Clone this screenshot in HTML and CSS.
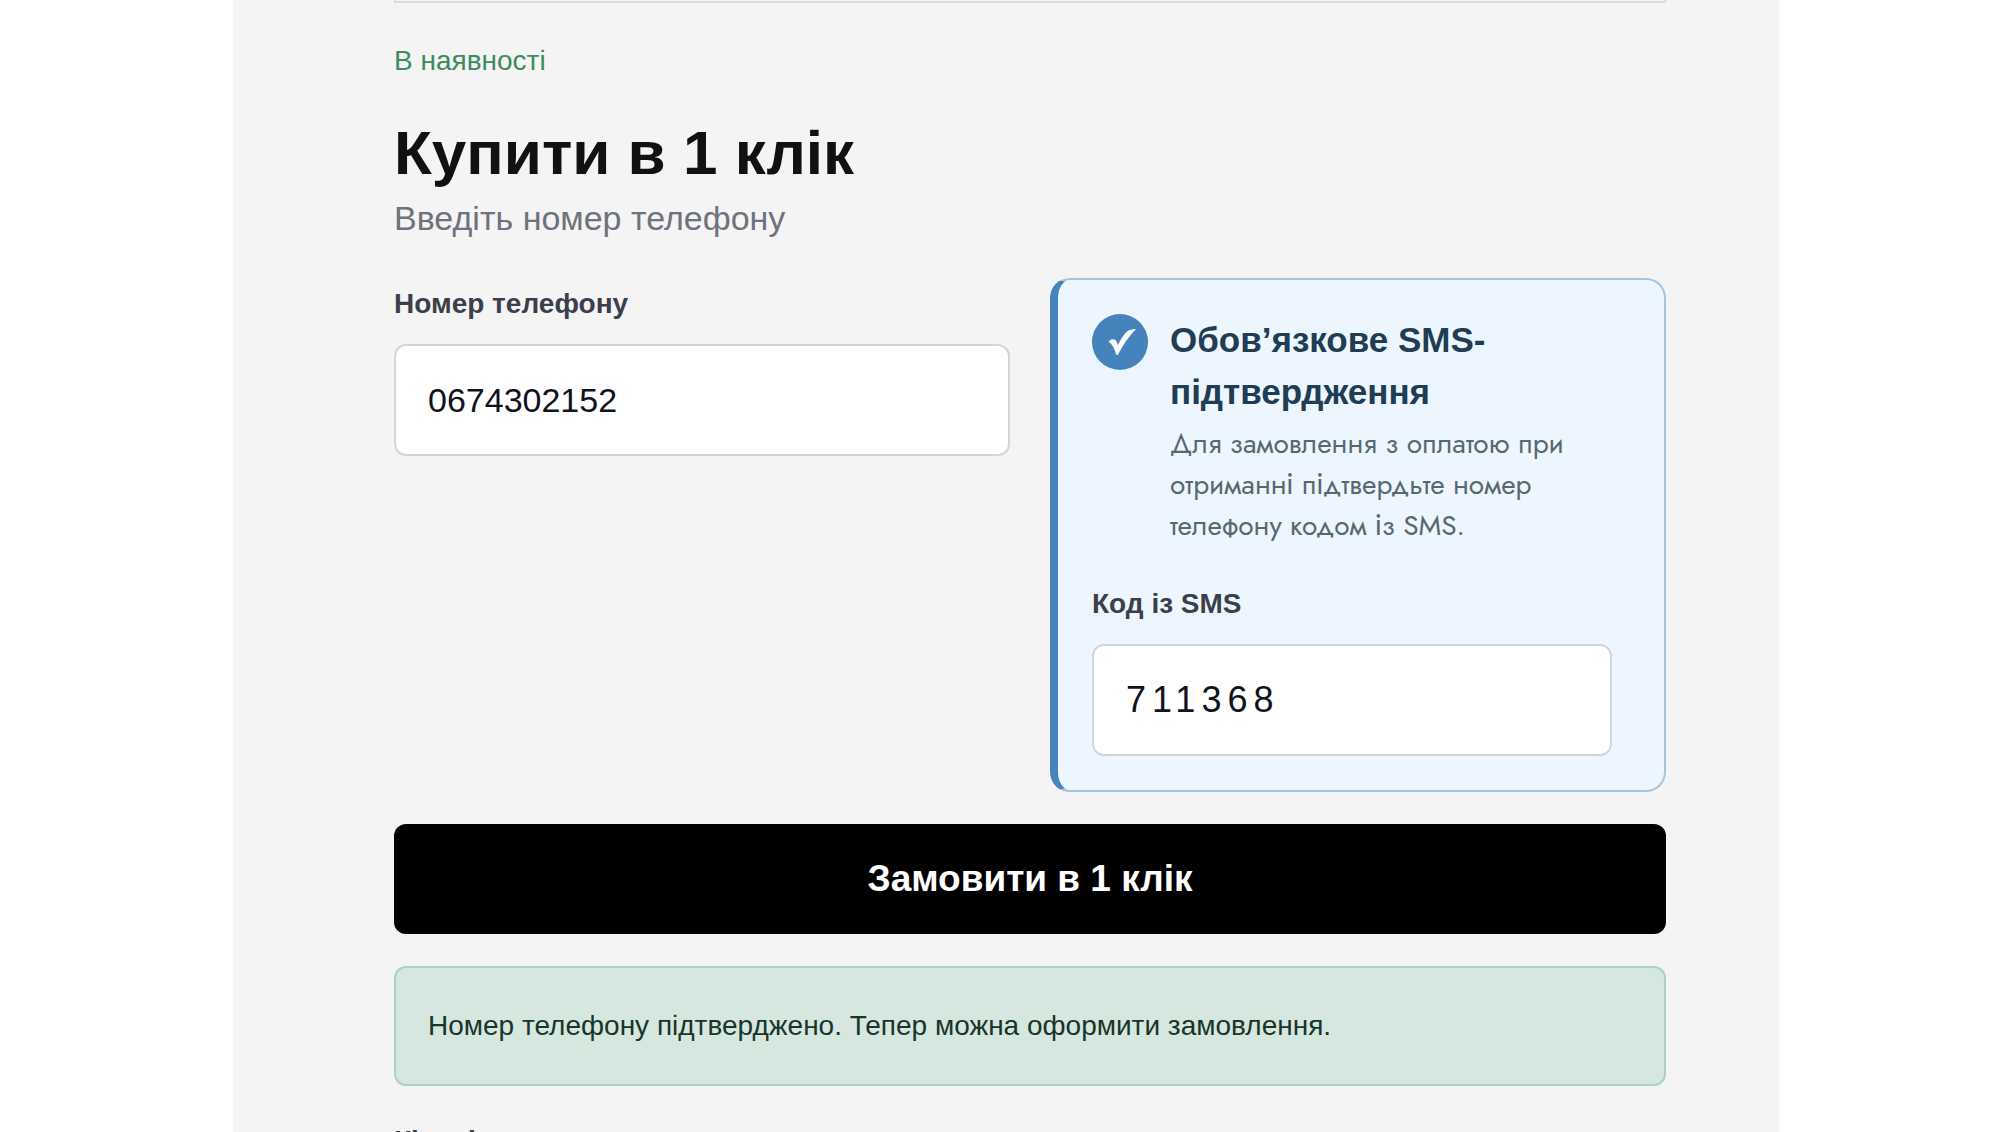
FILE: index.html
```html
<!DOCTYPE html>
<html lang="uk">
<head>
<meta charset="utf-8">
<title>Купити в 1 клік</title>
<meta name="viewport" content="width=device-width, initial-scale=1">
<link rel="stylesheet" href="styles.css">
</head>
<body>
<main class="panel">
  <hr class="divider">
  <p class="stock">В наявності</p>
  <form class="order">
    <h1 class="order-title">Купити в 1 клік</h1>
    <p class="order-hint">Введіть номер телефону</p>
    <div class="order-grid">
      <div class="field">
        <label class="label" for="phone">Номер телефону</label>
        <input class="input" id="phone" type="tel" value="0674302152">
      </div>
      <section class="sms">
        <div class="sms-head">
          <span class="badge">
            <svg class="badge-icon" viewBox="0 0 28 28" aria-hidden="true"><path d="M0.500 13.500 Q4 10 7.500 12 Q8.800 13.500 9.800 17 Q15 7 19 3.500 Q22 1 28 1 Q18 11 9.800 27 L8.300 27 Q5.500 17 0.500 13.500Z" fill="currentColor"/></svg>
          </span>
          <div class="sms-text">
            <h2 class="sms-title">Обов’язкове SMS-підтвердження</h2>
            <p class="sms-desc">Для замовлення з оплатою при отриманні підтвердьте номер телефону кодом із SMS.</p>
          </div>
        </div>
        <div class="field field-code">
          <label class="label" for="code">Код із SMS</label>
          <input class="input input-code" id="code" type="text" inputmode="numeric" value="711368">
        </div>
      </section>
    </div>
    <button class="submit" type="button">Замовити в 1 клік</button>
    <p class="alert" role="status">Номер телефону підтверджено. Тепер можна оформити замовлення.</p>
  </form>
  <p class="quantity label">Кількість</p>
</main>
</body>
</html>
```

FILE: styles.css
```css
* { box-sizing: border-box; }

body {
  margin: 0;
  height: 100vh;
  overflow: hidden;
  background: #fff;
  font-family: "Liberation Sans", Arial, sans-serif;
  font-size: 28px;
  line-height: 40px;
  color: #111;
}

h1, h2, p { margin: 0; }

.panel {
  max-width: 1546px;
  min-height: 100vh;
  margin: 0 auto;
  padding: 0 113px 0 161px;
  background: #f4f4f4;
}

.divider {
  height: 3px;
  margin: 0;
  border: 2px solid #dbdedd;
  border-top: 0;
}

.stock {
  padding-top: 38px;
  color: #3d8b5f;
}

.order { padding-top: 36px; }

.order-title {
  font-size: 62px;
  line-height: 72px;
}

.order-hint {
  font-size: 34px;
  line-height: 58px;
  color: #6f727c;
}

.order-grid {
  display: grid;
  grid-template-columns: 1fr 1fr;
  gap: 40px;
  margin-top: 31px;
}

.field {
  display: flex;
  flex-direction: column;
  gap: 20px;
}

.order-grid > .field { padding-top: 6px; }

.label {
  font-weight: 700;
  color: #3b3f4b;
}

.input {
  width: 100%;
  height: 112px;
  padding: 0 32px;
  border: 2px solid #d3d5d6;
  border-radius: 12px;
  background: #fff;
  color: #10131c;
  font-family: inherit;
  font-size: 34px;
}

.sms {
  padding: 34px;
  border: 2px solid #a5c5df;
  border-left: 8px solid #4583bc;
  border-radius: 20px;
  background: #edf6ff;
}

.sms-head {
  display: flex;
  gap: 22px;
}

.badge {
  display: flex;
  flex: none;
  align-items: center;
  justify-content: center;
  width: 56px;
  height: 56px;
  padding-left: 4px;
  border-radius: 50%;
  background: #4583bc;
  color: #fff;
}

.badge-icon {
  width: 28px;
  height: 28px;
}

.sms-title {
  font-size: 35px;
  line-height: 52px;
  color: #203d53;
}

.sms-desc {
  margin-top: 5px;
  font-family: Jost, Lato, sans-serif;
  line-height: 41px;
  color: #566872;
}

.field-code {
  max-width: 520px;
  margin-top: 38px;
}

.input-code {
  font-size: 36px;
  letter-spacing: 6px;
}

.submit {
  display: block;
  width: 100%;
  height: 110px;
  margin-top: 32px;
  border: 0;
  border-radius: 12px;
  background: #000;
  color: #fff;
  font-family: inherit;
  font-size: 37px;
  font-weight: 700;
}

.alert {
  margin-top: 32px;
  padding: 38px 32px;
  border: 2px solid #aed1c2;
  border-radius: 12px;
  background: #d5e7de;
  color: #17352a;
}

.quantity { margin-top: 35px; }
```
